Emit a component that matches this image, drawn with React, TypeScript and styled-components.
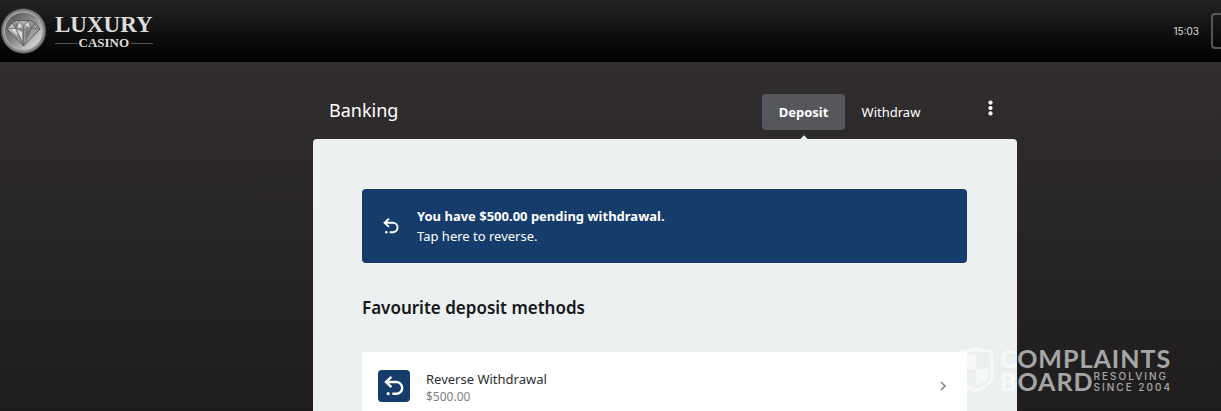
import React from "react";
import styled, { createGlobalStyle } from "styled-components";

const GlobalStyle = createGlobalStyle`
  *, *::before, *::after { box-sizing: border-box; }
  body {
    margin: 0;
    background: #1f1d1e;
    font-family: "Noto Sans", "Open Sans", sans-serif;
  }
  h1, h2, p { margin: 0; }
  button { font-family: inherit; border: 0; padding: 0; background: none; cursor: pointer; }
`;

const Page = styled.div`
  position: relative;
  display: flex;
  flex-direction: column;
  min-height: 100vh;
  overflow: hidden;
  background: linear-gradient(#353132, #1e1c1d);
`;

const Header = styled.header`
  display: flex;
  align-items: center;
  justify-content: space-between;
  height: 62px;
  background: linear-gradient(#222222, #000000);
`;

const Brand = styled.a`
  display: flex;
  align-items: center;
  gap: 7px;
  color: #dcdcdc;
  text-decoration: none;
  font-family: "Liberation Serif", serif;
`;

const BrandText = styled.span`
  display: flex;
  flex-direction: column;
`;

const BrandName = styled.span`
  font-size: 23px;
  line-height: 24px;
  font-weight: 700;
`;

const BrandSub = styled.span`
  display: flex;
  align-items: center;
  gap: 2px;
  font-size: 13px;
  line-height: 12px;
  font-weight: 700;

  &::before, &::after {
    content: "";
    flex: 1;
    height: 1px;
    background: #555555;
  }
`;

const HeaderTools = styled.div`
  display: flex;
  align-items: center;
  gap: 12px;
`;

const Clock = styled.time`
  font-family: Inter, sans-serif;
  font-size: 10px;
  color: #dddddd;
`;

const EdgeButton = styled.button`
  width: 10px;
  height: 36px;
  border: 2px solid #565656;
  border-right: 0;
  border-radius: 4px 0 0 4px;
`;

const Main = styled.main`
  flex: 1;
  display: grid;
  grid-template-columns: 313fr 704px 204fr;
`;

const Banking = styled.div`
  grid-column: 2;
  display: flex;
  flex-direction: column;
`;

const TitleBar = styled.div`
  display: flex;
  align-items: center;
  height: 77px;
  padding: 23px 20px 0 16px;
`;

const Title = styled.h1`
  flex: 1;
  align-self: flex-start;
  padding-top: 11px;
  font-size: 18px;
  line-height: 28px;
  font-weight: 400;
  color: #ffffff;
`;

const Tabs = styled.nav`
  display: flex;
  margin-right: 47px;
`;

const Tab = styled.button<{ $active?: boolean }>`
  position: relative;
  height: 36px;
  width: ${(p) => (p.$active ? 83 : 92)}px;
  border-radius: 4px;
  background: ${(p) => (p.$active ? "#56565d" : "transparent")};
  color: #ffffff;
  font-size: 13px;
  font-weight: ${(p) => (p.$active ? 700 : 400)};

  &::after {
    content: "";
    display: ${(p) => (p.$active ? "block" : "none")};
    position: absolute;
    left: 50%;
    top: 43px;
    width: 8px;
    height: 8px;
    margin-left: -4px;
    background: #ecf0f1;
    transform: rotate(45deg);
  }
`;

const MoreButton = styled.button`
  display: grid;
  place-items: center;
  width: 13px;
  height: 46px;
  align-self: flex-start;
  color: #ffffff;
`;

const Panel = styled.section`
  flex: 1;
  padding: 50px 50px 0 49px;
  border-radius: 4px 4px 0 0;
  background: #ecf0f1;
`;

const Notice = styled.button`
  display: flex;
  align-items: center;
  gap: 18px;
  width: 100%;
  height: 74px;
  padding: 0 21px;
  border-radius: 4px;
  background: #153c6b;
  color: #ffffff;
  text-align: left;
  font-size: 13px;
  line-height: 20px;
`;

const NoticeText = styled.span`
  display: flex;
  flex-direction: column;
`;

const Heading = styled.h2`
  padding: 32px 0 31px;
  font-size: 17px;
  line-height: 26px;
  font-weight: 600;
  color: #151719;
`;

const Method = styled.button`
  display: flex;
  align-items: center;
  width: 100%;
  height: 59px;
  padding: 9px 19px 0 16px;
  background: #ffffff;
  text-align: left;
`;

const MethodIcon = styled.span`
  display: grid;
  place-items: center;
  width: 32px;
  height: 32px;
  border-radius: 4px;
  background: #153c6b;
  color: #ffffff;
`;

const MethodText = styled.span`
  flex: 1;
  display: flex;
  flex-direction: column;
  padding: 3px 0 0 16px;
  font-size: 13px;
  line-height: 18px;
  font-weight: 400;
  color: #2b2e30;
`;

const Amount = styled.span`
  font-size: 12px;
  color: #808080;
`;

const Watermark = styled.div`
  position: absolute;
  right: 50px;
  bottom: 18px;
  display: flex;
  align-items: center;
  gap: 6px;
  opacity: 0.6;
  color: #ffffff;
  font-family: Lato, sans-serif;
  pointer-events: none;
`;

const WatermarkText = styled.div`
  width: 171px;
  font-size: 25px;
  line-height: 23px;
  font-weight: 700;
  letter-spacing: 1px;
`;

const WatermarkRow = styled.div`
  display: flex;
  align-items: center;
  justify-content: space-between;
`;

const Tagline = styled.div`
  font-family: Inter, sans-serif;
  font-size: 10px;
  line-height: 11px;
  font-weight: 500;
  letter-spacing: 2px;
  white-space: nowrap;
`;

const ReverseIcon = ({ size }: { size: number }) => (
  <svg width={size} height={size} viewBox="0 0 20 20" fill="none" stroke="currentColor" strokeWidth="2.4" aria-hidden="true">
    <path d="M7.4 .9 2 6l5.400 5.100M2.400 6h9.900a5.900 5.900 0 0 1 0 11.800H8.400" />
    <circle cx="4.200" cy="17.700" r="1.600" fill="currentColor" stroke="none" />
  </svg>
);

const Diamond = () => (
  <svg width="48" height="48" viewBox="0 0 48 48" aria-hidden="true">
    <defs>
      <linearGradient id="coin" x1="0" y1="0" x2="1" y2="1">
        <stop offset="0" stopColor="#4c4c4c" />
        <stop offset="0.45" stopColor="#858585" />
        <stop offset="1" stopColor="#f0f0f0" />
      </linearGradient>
      <linearGradient id="gem" x1="0" y1="0" x2="1" y2="1">
        <stop offset="0" stopColor="#d5d5d5" />
        <stop offset="0.5" stopColor="#929292" />
        <stop offset="1" stopColor="#b8b8b8" />
      </linearGradient>
    </defs>
    <circle cx="23.500" cy="24" r="22.200" fill="#858585" stroke="#4d4d4d" />
    <circle cx="23.500" cy="24" r="19" fill="url(#coin)" stroke="#b9b9b9" />
    <path d="M12 16 17 13.500h13l5.500 2.500 4.500 6-16.500 17L7 22Z" fill="url(#gem)" stroke="#4a4a4a" strokeWidth=".8" />
    <path d="m7 22 9-1 7.500 2 8-2 8.500 1M16 21l3-7 4.500 5L28 14l3.500 7M16 21l7.500 18L31.500 21M12 16l4 5M35.500 16l-4 5M23.500 19v20" fill="none" stroke="#5c5c5c" strokeWidth=".7" />
    <path d="m17 23 5 2v8Zm2-7 3 3-4 2Zm9-1 2 5-5-2ZM11 22l4 0 3 7Z" fill="#f2f2f2" opacity=".75" />
    <path d="m12.500 16.500 3.500 4.500 2.500-6M26 24l4-1-5 11Z" fill="#4a4a4a" opacity=".45" />
  </svg>
);

export default function App() {
  return (
    <>
      <GlobalStyle />
      <Page>
        <Header>
          <Brand href="#">
            <Diamond />
            <BrandText>
              <BrandName>LUXURY</BrandName>
              <BrandSub>CASINO</BrandSub>
            </BrandText>
          </Brand>
          <HeaderTools>
            <Clock>15:03</Clock>
            <EdgeButton aria-label="Account" />
          </HeaderTools>
        </Header>
        <Main>
          <Banking>
            <TitleBar>
              <Title>Banking</Title>
              <Tabs>
                <Tab $active>Deposit</Tab>
                <Tab>Withdraw</Tab>
              </Tabs>
              <MoreButton aria-label="More options">
                <svg width="13" height="16" viewBox="0 0 13 16" fill="currentColor" aria-hidden="true">
                  <circle cx="6.500" cy="2.600" r="2.100" />
                  <circle cx="6.500" cy="8" r="2.100" />
                  <circle cx="6.500" cy="13.400" r="2.100" />
                </svg>
              </MoreButton>
            </TitleBar>
            <Panel>
              <Notice>
                <ReverseIcon size={16} />
                <NoticeText>
                  <strong>You have $500.00 pending withdrawal.</strong>
                  <span>Tap here to reverse.</span>
                </NoticeText>
              </Notice>
              <Heading>Favourite deposit methods</Heading>
              <Method>
                <MethodIcon>
                  <ReverseIcon size={20} />
                </MethodIcon>
                <MethodText>
                  Reverse Withdrawal
                  <Amount>$500.00</Amount>
                </MethodText>
                <svg width="10" height="10" viewBox="0 0 10 10" fill="none" stroke="#777" strokeWidth="1.400" aria-hidden="true">
                  <path d="m3 1 4 4-4 4" />
                </svg>
              </Method>
            </Panel>
          </Banking>
        </Main>
        <Watermark>
          <svg width="36" height="46" viewBox="0 0 36 46" aria-hidden="true">
            <path d="M18 2C14 4 9 4 6 4Q2 4 2 9V29C2 36 7 39 18 44C29 39 34 36 34 29V9Q34 4 30 4C27 4 22 4 18 2Z" fill="none" stroke="currentColor" strokeWidth="3" />
            <path d="M6 8h12v14H6ZM18 22h12v7c0 4-4 6-12 10Z" fill="currentColor" />
          </svg>
          <WatermarkText>
            <div>COMPLAINTS</div>
            <WatermarkRow>
              <span>BOARD</span>
              <Tagline>
                <div>RESOLVING</div>
                <div>SINCE 2004</div>
              </Tagline>
            </WatermarkRow>
          </WatermarkText>
        </Watermark>
      </Page>
    </>
  );
}
